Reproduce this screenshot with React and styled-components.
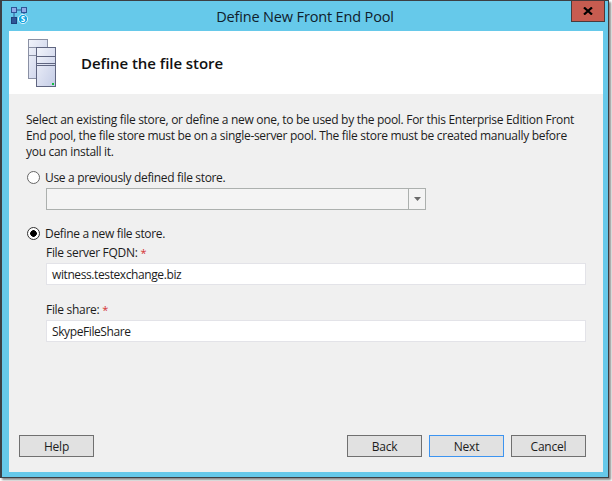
import React from 'react';
import styled, { createGlobalStyle } from 'styled-components';

const GlobalStyle = createGlobalStyle`
  html, body {
    margin: 0;
    padding: 0;
    background: #fff;
  }
  body {
    font-family: "Open Sans", "Noto Sans", sans-serif;
    font-size: 12px;
    color: #1a1a1a;
  }
`;

const Screen = styled.div`
  width: 612px;
  height: 481px;
  overflow: hidden;
  background: #fff;
`;

const Frame = styled.div`
  width: 609px;
  height: 478px;
  box-sizing: border-box;
  display: flex;
  flex-direction: column;
  background: #66c9ea;
  border: 1px solid #3c3f44;
  border-left-width: 2px;
  box-shadow: 2px 2px 2px #8a8a8a;
`;

const TitleBar = styled.div`
  position: relative;
  height: 30px;
  flex: none;
  display: flex;
  align-items: center;
  justify-content: center;
  font-size: 14.5px;
  letter-spacing: -0.15px;
  color: #10202c;
`;

const AppIcon = styled.svg`
  position: absolute;
  left: 9px;
  top: 6px;
`;

const CloseButton = styled.div`
  position: absolute;
  right: 3px;
  top: -1px;
  width: 34px;
  height: 22px;
  box-sizing: border-box;
  display: flex;
  align-items: center;
  justify-content: center;
  background: #c75c50;
  border: 1px solid #4a3a3c;
`;

const Client = styled.div`
  flex: 1;
  margin: 0 5px 5px 7px;
  display: flex;
  flex-direction: column;
  background: #f0f0f0;
  min-height: 0;
`;

const Header = styled.div`
  height: 63px;
  flex: none;
  display: flex;
  align-items: center;
  gap: 25px;
  padding-left: 19px;
  background: #fff;
`;

const Heading = styled.h1`
  margin: 0;
  font-size: 15px;
  font-weight: 600;
  letter-spacing: -0.05px;
  color: #111;
`;

const Body = styled.div`
  flex: 1;
  display: flex;
  flex-direction: column;
  padding-bottom: 15px;
`;

const Content = styled.div`
  padding: 18px 17px 0 18px;
  display: flex;
  flex-direction: column;
`;

const Intro = styled.p`
  margin: 0 0 9px -1px;
  font-size: 12px;
  line-height: 16px;
  letter-spacing: -0.3px;
  color: #1c1c1c;
`;

const RadioRow = styled.label`
  display: flex;
  align-items: center;
  gap: 5px;
  height: 16px;
  margin-top: ${p => p.$top || 0}px;
  letter-spacing: -0.33px;
  color: #1c1c1c;
`;

const RadioMark = styled.span`
  width: 13px;
  height: 13px;
  box-sizing: border-box;
  border-radius: 50%;
  border: 1px solid ${p => (p.$on ? '#333' : '#666')};
  background: ${p => (p.$on ? 'radial-gradient(circle, #000 0 3px, #fff 3.6px)' : '#fff')};
`;

const Indented = styled.div`
  margin-left: 19px;
  display: flex;
  flex-direction: column;
`;

const Combo = styled.div`
  width: 380px;
  height: 22px;
  margin-top: 3px;
  box-sizing: border-box;
  display: flex;
  justify-content: flex-end;
  border: 1px solid #acb0ae;
  background: #f4f4f4;
`;

const ComboArrow = styled.div`
  width: 16px;
  display: flex;
  align-items: center;
  justify-content: center;
  border-left: 1px solid #acb0ae;
`;

const FieldLabel = styled.div`
  height: 16px;
  line-height: 16px;
  margin-top: ${p => p.$top}px;
  letter-spacing: -0.3px;
  color: #1c1c1c;
`;

const Star = styled.span`
  font-size: 11px;
  color: #d43030;
`;

const TextBox = styled.div`
  width: 540px;
  height: 22px;
  margin-top: 2px;
  box-sizing: border-box;
  padding-left: 5px;
  display: flex;
  align-items: center;
  letter-spacing: -0.4px;
  color: #1c1c1c;
  background: #fff;
  border: 1px solid #e3e3e8;
`;

const Footer = styled.div`
  margin-top: auto;
  padding: 0 17px 0 10px;
  display: flex;
  gap: 7px;
`;

const Button = styled.button`
  width: 75px;
  height: 22px;
  padding: 0;
  font-family: inherit;
  font-size: 12px;
  letter-spacing: -0.2px;
  color: #1c1c1c;
  background: #e1e1e1;
  border: 1px solid ${p => (p.$focused ? '#3d94f0' : '#707070')};
  ${p => p.$push && 'margin-left: auto;'}
`;

const StoreIcon = () => (
  <svg width="28" height="48" viewBox="0 0 28 48">
    <defs>
      <linearGradient id="rack" x1="0" y1="0" x2="1" y2="1">
        <stop offset="0" stopColor="#f2f4fb" />
        <stop offset="1" stopColor="#c4cce6" />
      </linearGradient>
    </defs>
    <rect x="0.5" y="0.5" width="19" height="39" fill="url(#rack)" stroke="#8a90a4" />
    <path d="M1 8.5h18M1 16.5h7" stroke="#8a90a4" fill="none" />
    <rect x="8.5" y="8.5" width="19" height="39" fill="url(#rack)" stroke="#5f6580" />
    <path d="M9 17.5h18M9 24.5h18M9 26.5h18" stroke="#5f6580" fill="none" />
    <rect x="24" y="44" width="2" height="2" fill="#10c040" />
  </svg>
);

const App = () => (
  <Screen>
    <GlobalStyle />
    <Frame>
      <TitleBar>
        <AppIcon width="17" height="17" viewBox="0 0 17 17">
          <rect x="0.5" y="0.5" width="5" height="5" fill="#8fa9e6" stroke="#2f5596" />
          <rect x="10.5" y="0.5" width="5" height="5" fill="#8fa9e6" stroke="#2f5596" />
          <rect x="0.5" y="10.5" width="5" height="6" fill="#2f5596" stroke="#1f3f7a" />
          <path d="M3 6v5M13 6v2M6 3h4" stroke="#2f5596" fill="none" />
          <circle cx="12" cy="12" r="4.6" fill="#12a6e2" stroke="#fff" strokeWidth="0.8" />
          <text x="12" y="15" fontSize="8" fontWeight="700" textAnchor="middle" fill="#fff" fontFamily="Open Sans">S</text>
        </AppIcon>
        Define New Front End Pool
        <CloseButton>
          <svg width="10" height="8" viewBox="0 0 10 8">
            <path d="M1 0.5l8 7M9 0.5l-8 7" stroke="#000" strokeWidth="2.2" fill="none" />
          </svg>
        </CloseButton>
      </TitleBar>
      <Client>
        <Header>
          <StoreIcon />
          <Heading>Define the file store</Heading>
        </Header>
        <Body>
          <Content>
            <Intro>
              Select an existing file store, or define a new one, to be used by the pool. For this Enterprise Edition Front
              <br />
              End pool, the file store must be on a single-server pool. The file store must be created manually before
              <br />
              you can install it.
            </Intro>
            <RadioRow>
              <RadioMark />
              Use a previously defined file store.
            </RadioRow>
            <Indented>
              <Combo>
                <ComboArrow>
                  <svg width="7" height="4" viewBox="0 0 7 4">
                    <path d="M0 0h7L3.5 4z" fill="#6a6a6a" />
                  </svg>
                </ComboArrow>
              </Combo>
            </Indented>
            <RadioRow $top={15}>
              <RadioMark $on />
              Define a new file store.
            </RadioRow>
            <Indented>
              <FieldLabel $top={4}>
                File server FQDN: <Star>*</Star>
              </FieldLabel>
              <TextBox>witness.testexchange.biz</TextBox>
              <FieldLabel $top={17}>
                File share: <Star>*</Star>
              </FieldLabel>
              <TextBox>SkypeFileShare</TextBox>
            </Indented>
          </Content>
          <Footer>
            <Button>Help</Button>
            <Button $push>Back</Button>
            <Button $focused>Next</Button>
            <Button>Cancel</Button>
          </Footer>
        </Body>
      </Client>
    </Frame>
  </Screen>
);

export default App;
